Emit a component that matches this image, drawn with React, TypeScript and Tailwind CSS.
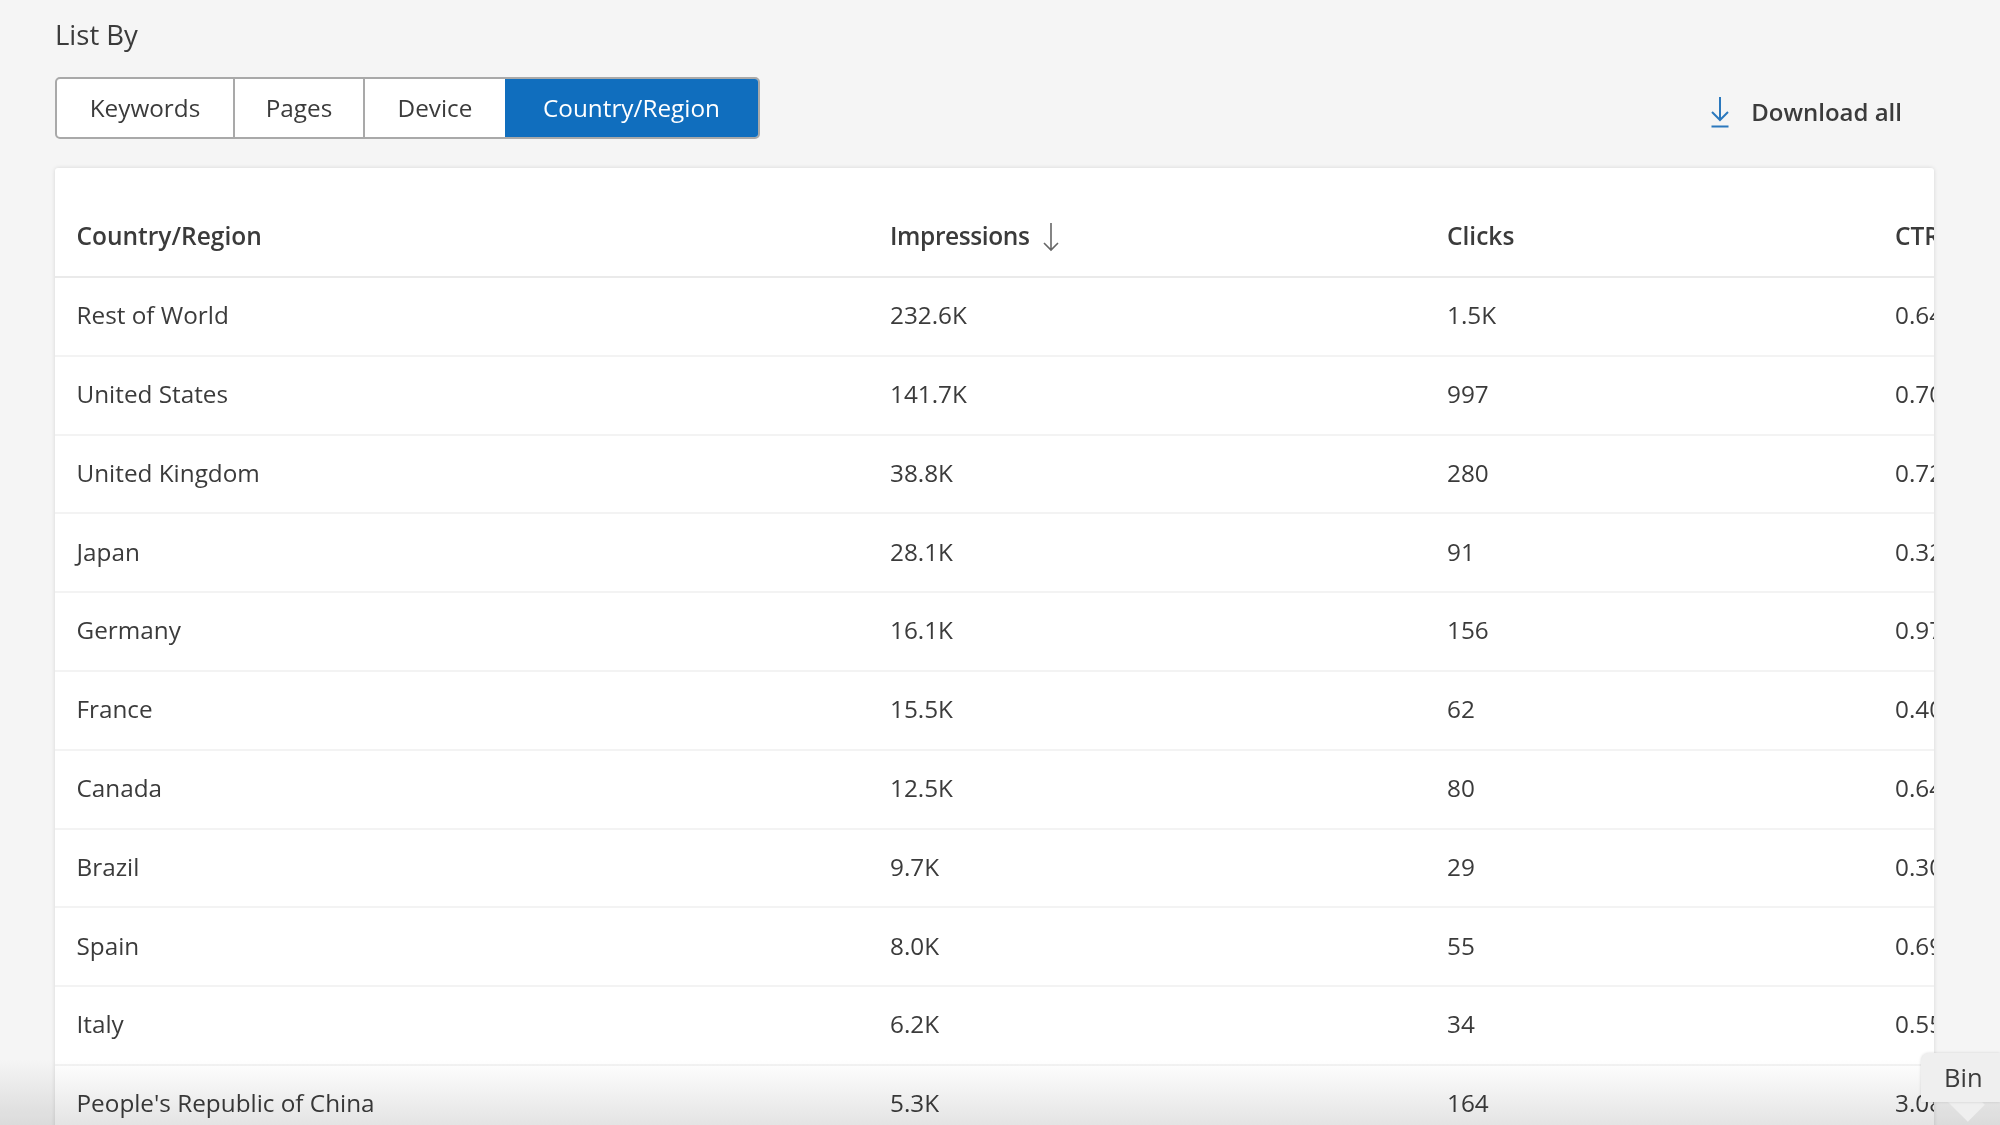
const rows = [
  ["Rest of World", "232.6K", "1.5K", "0.64%"],
  ["United States", "141.7K", "997", "0.70%"],
  ["United Kingdom", "38.8K", "280", "0.72%"],
  ["Japan", "28.1K", "91", "0.32%"],
  ["Germany", "16.1K", "156", "0.97%"],
  ["France", "15.5K", "62", "0.40%"],
  ["Canada", "12.5K", "80", "0.64%"],
  ["Brazil", "9.7K", "29", "0.30%"],
  ["Spain", "8.0K", "55", "0.69%"],
  ["Italy", "6.2K", "34", "0.55%"],
  ["People's Republic of China", "5.3K", "164", "3.08%"],
];

export default function App() {
  return (
    <div className="relative h-[1125px] w-[2000px] overflow-hidden bg-[#f5f5f5] font-['Open_Sans','Noto_Sans',sans-serif] text-[#3b3b3b]">
      <div className="pl-[55px] pr-[66px] pt-[16px]">
        <div className="h-[38px] text-[27.5px] leading-[38px]">List By</div>
        <div className="mt-[23px] flex items-center justify-between">
          <div className="flex h-[62px] overflow-hidden rounded-[5px] border-2 border-[#a9a9a9] bg-white text-[24.3px]">
            <div className="flex w-[176px] shrink-0 items-center justify-center">Keywords</div>
            <div className="flex w-[130px] shrink-0 items-center justify-center border-l-2 border-[#a9a9a9]">Pages</div>
            <div className="flex w-[142px] shrink-0 items-center justify-center border-l-2 border-[#a9a9a9]">Device</div>
            <div className="flex w-[253px] shrink-0 items-center justify-center bg-[#106ebe] text-white">Country/Region</div>
          </div>
          <div className="mr-[32px] mt-[7px] flex items-center gap-[21px]">
            <svg width="20" height="32" viewBox="0 0 20 32" fill="none" stroke="#2b78bd" strokeWidth="2">
              <path d="M10 1v23M2 16l8 8 8-8M1.500 30.500h17" />
            </svg>
            <span className="text-[24px] font-semibold">Download all</span>
          </div>
        </div>
        <div className="mt-[29px] h-[1000px] w-[1879px] overflow-hidden rounded-[3px] bg-white shadow-[0_0_4px_rgba(0,0,0,0.13)]">
          <div className="flex h-[110px] items-end border-b-2 border-[#eaeaea] pb-[21px] text-[24.5px] font-semibold">
            <div className="w-[835px] shrink-0 pl-[21.5px]">Country/Region</div>
            <div className="flex w-[557px] shrink-0 items-center gap-[13px]">
              <span className="tracking-[-0.4px]">Impressions</span>
              <svg width="16" height="30" viewBox="0 0 16 30" fill="none" stroke="#666" strokeWidth="1.6">
                <path d="M8 1v27M1 21l7 7 7-7" />
              </svg>
            </div>
            <div className="w-[448px] shrink-0">Clicks</div>
            <div className="shrink-0 whitespace-nowrap">CTR</div>
          </div>
          {rows.map((r) => (
            <div key={r[0]} className="flex h-[78.8px] items-center border-b-2 border-[#f3f3f3] pb-[2px] text-[24.3px]">
              <div className="w-[835px] shrink-0 pl-[21.5px]">{r[0]}</div>
              <div className="w-[557px] shrink-0">{r[1]}</div>
              <div className="w-[448px] shrink-0">{r[2]}</div>
              <div className="shrink-0 whitespace-nowrap">{r[3]}</div>
            </div>
          ))}
        </div>
      </div>
      <div className="pointer-events-none absolute inset-x-0 bottom-0 h-[65px] bg-gradient-to-b from-white to-[#e4e4e4] mix-blend-multiply" />
      <div className="absolute bottom-[7px] left-[1949px] h-[32px] w-[32px] scale-y-75 rotate-45 bg-[#efefef]" />
      <div className="absolute bottom-[23px] left-[1921px] flex h-[49px] w-[79px] items-center rounded-tl-[8px] bg-[#efefef] pl-[23px] text-[25.5px] shadow-[0_0_3px_rgba(0,0,0,0.15)]">
        Bin
      </div>
    </div>
  );
}
